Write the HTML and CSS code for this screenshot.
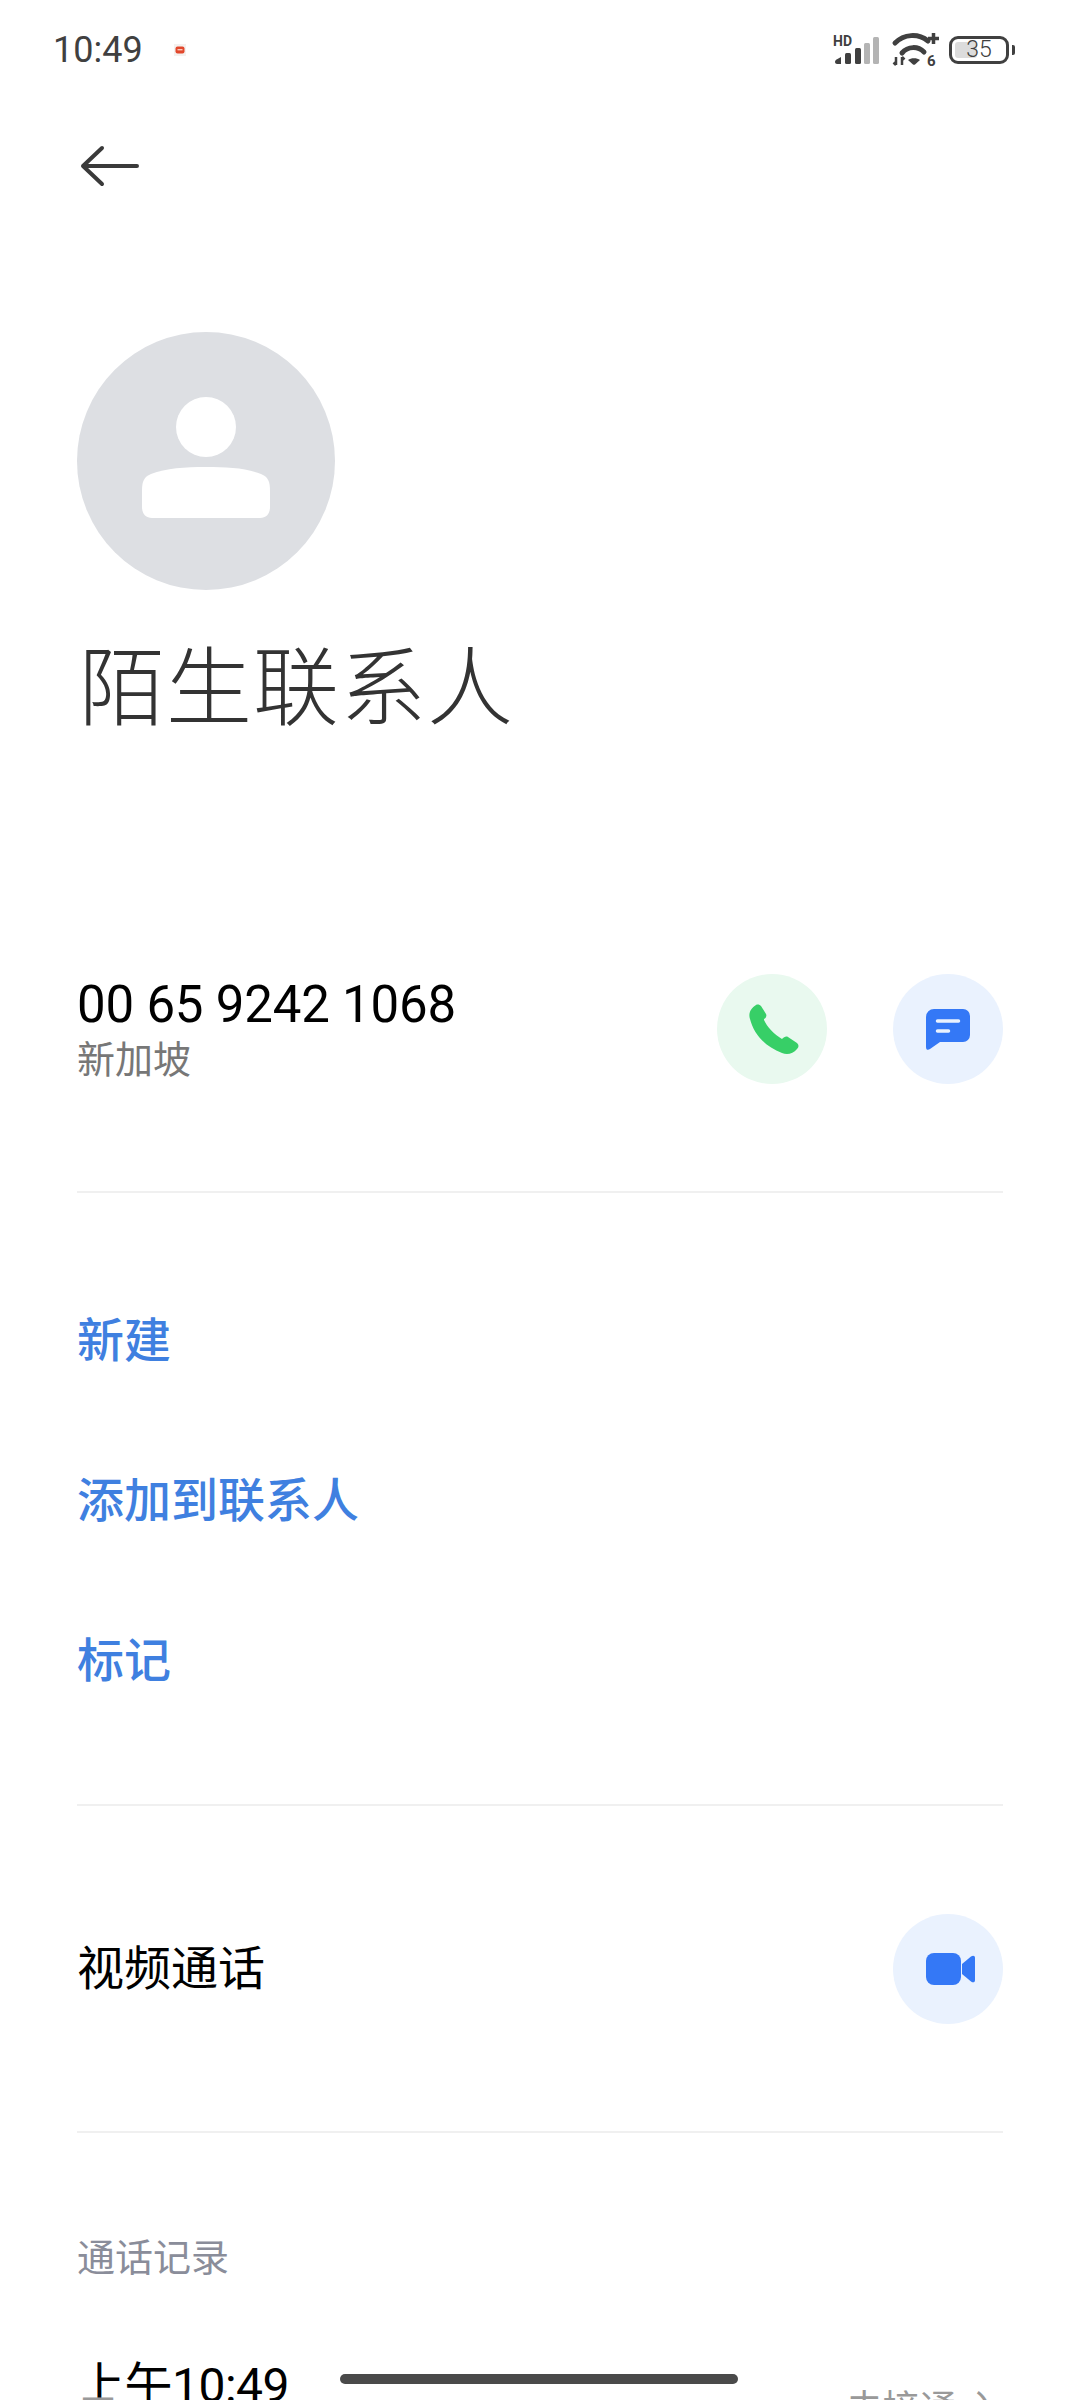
FILE: index.html

```html
<!DOCTYPE html>
<html lang="zh-CN">
	<head>
		<title>陌生联系人</title>
		<meta charset="utf-8">
		<link rel="stylesheet" href="styles.css">
	</head>
	<body>
		<main class="page">
			<header class="status-bar">
				<div class="status-left">
					<span class="status-time">10:49</span>
					<svg class="status-app" width="14" height="14" viewBox="0 0 14 14">
						<rect x="1" y="1" width="12" height="12" fill="#f4f1ef"/>
						<rect x="2.500" y="3.500" width="9" height="7" rx="2" fill="#e2482c"/>
						<rect x="4.500" y="6" width="5" height="1.400" fill="#f9c9bc"/>
					</svg>
				</div>
				<div class="status-right">
					<div class="signal">
						<span class="signal-hd">HD</span>
						<svg width="46" height="28" viewBox="0 0 46 28">
							<path d="M2 26C2 24.500 3 23.500 4.500 23L8 21V28H4C3 28 2 27 2 26Z" fill="#404040"/>
							<rect x="12" y="17" width="6" height="11" rx="1.500" fill="#404040"/>
							<rect x="22" y="12" width="6" height="16" rx="1.500" fill="#404040"/>
							<rect x="31" y="7" width="6" height="21" rx="1.500" fill="#b4b4b4"/>
							<rect x="40" y="1" width="6" height="27" rx="1.500" fill="#b4b4b4"/>
						</svg>
					</div>
					<svg class="wifi" width="48" height="34" viewBox="0 0 48 34">
						<g fill="none" stroke="#404040" stroke-width="5" stroke-linecap="round">
							<path d="M4 11C13 2 27 1 37 9"/>
							<path d="M11 21C17 14 27 14 33 20"/>
						</g>
						<path d="M17 28C20 25.500 26 25.500 29 28L24 32.500Q23 33 22 32.500Z" fill="#404040"/>
						<path d="M37 6.500H48M42.500 1V12" fill="none" stroke="#404040" stroke-width="3.500"/>
						<path d="M5 25V33M2.500 30.500 5 33M11 33V25M13.500 27.500 11 25" fill="none" stroke="#404040" stroke-width="2.500"/>
						<text class="wifi-six" x="36" y="34">6</text>
					</svg>
					<div class="battery">
						<div class="battery-body">
							<span class="battery-fill"></span>
							<span class="battery-level">35</span>
						</div>
						<span class="battery-tip"></span>
					</div>
				</div>
			</header>

			<nav class="top-nav">
				<svg width="60" height="42" viewBox="0 0 60 42">
					<path d="M57 21H3M22 3 3 21l19 18" fill="none" stroke="#3a3a3a" stroke-width="4" stroke-linecap="round" stroke-linejoin="round"/>
				</svg>
			</nav>

			<section class="profile">
				<div class="avatar">
					<svg width="130" height="122" viewBox="0 0 130 122">
						<circle cx="65" cy="30" r="30" fill="#fff"/>
						<path d="M1 94C1 84 3 80 10 77 25 71 44 70 65 70 86 70 105 71 120 77 127 80 129 84 129 94V110C129 117 125 121 119 121H11C5 121 1 117 1 110Z" fill="#fff"/>
					</svg>
				</div>
				<h1 class="contact-name">陌生联系人</h1>
			</section>

			<section class="number-section">
				<div class="number-info">
					<div class="number">00 65 9242 1068</div>
					<div class="region">新加坡</div>
				</div>
				<div class="number-actions">
					<button class="round-btn green">
						<svg class="nudge" width="50" height="50" viewBox="0 0 50 50">
							<path d="M7 1C9 0 11 1 12 2L17 10C18 12 17 14 15 15L15 16C18 23 25 30 33 35 35 33 37 32 39 33L48 39C50 41 50 43 48 45 44 50 38 51 33 49 17 43 5 31 1 15-1 9 2 4 7 1Z" fill="#37cf67"/>
						</svg>
					</button>
					<button class="round-btn blue">
						<svg width="44" height="41" viewBox="0 0 44 41">
							<path d="M8 0H37A7 7 0 0 1 44 7V26A7 7 0 0 1 37 33H14L4 40C2 41.500 0 41 0 38V8A8 8 0 0 1 8 0Z" fill="#3478f6"/>
							<path d="M11.500 12H32.500M11.500 22H22.500" fill="none" stroke="#eaf2fe" stroke-width="3.500" stroke-linecap="round"/>
						</svg>
					</button>
				</div>
			</section>

			<section class="actions">
				<a class="action">新建</a>
				<a class="action">添加到联系人</a>
				<a class="action">标记</a>
			</section>

			<section class="video-section">
				<span class="video-label">视频通话</span>
				<button class="round-btn blue">
					<svg class="nudge" width="49" height="32" viewBox="0 0 49 32">
						<rect width="35" height="32" rx="8" fill="#3478f6"/>
						<path d="M36 11 45 3.500C47 2 49 2.500 49 5V27C49 29.500 47 30 45 28.500L36 21Z" fill="#3478f6"/>
					</svg>
				</button>
			</section>

			<section class="history">
				<h2 class="history-title">通话记录</h2>
				<div class="history-row">
					<span class="history-time">上午10:49</span>
					<span class="history-type">未接通 入</span>
				</div>
				<div class="history-sub">二</div>
			</section>

			<div class="home-bar"></div>
		</main>
	</body>
</html>
```

FILE: styles.css

```css
html,body{
	margin:0;
	background:#fff;
}

*{
	box-sizing:border-box;
}

.page{
	position:relative;
	width:1080px;
	height:2400px;
	overflow:hidden;
	font-family:Roboto,"Noto Sans CJK SC",sans-serif;
	color:#000;
}

.status-bar{
	display:flex;
	justify-content:space-between;
	align-items:center;
	height:100px;
	padding:0 65px 0 53px;
}
.status-left,.status-right{
	display:flex;
	align-items:center;
}
.status-time{
	font-size:36px;
	color:#404040;
}
.status-app{
	margin-left:30px;
}
.status-right{
	gap:12px;
}

.signal{
	position:relative;
	width:46px;
	height:28px;
	margin:-1px 0 0 0;
}
.signal svg{
	display:block;
}
.signal-hd{
	position:absolute;
	left:0;
	top:-1px;
	font-size:14px;
	line-height:12px;
	font-weight:700;
	color:#404040;
}
.wifi{
	margin:-2px -2px 0 0;
}
.wifi-six{
	font:700 15px Roboto,sans-serif;
	fill:#404040;
}

.battery{
	display:flex;
	align-items:center;
	gap:3px;
	margin-top:-1px;
}
.battery-body{
	position:relative;
	display:flex;
	align-items:center;
	justify-content:center;
	width:60px;
	height:28px;
	border:3px solid #404040;
	border-radius:9px;
}
.battery-fill{
	position:absolute;
	left:3px;
	top:3px;
	bottom:3px;
	width:22px;
	background:#dcdcdc;
	border-radius:3px;
}
.battery-level{
	position:relative;
	font-size:23px;
	font-weight:300;
	color:#404040;
}
.battery-tip{
	width:3px;
	height:10px;
	background:#404040;
	border-radius:0 2px 2px 0;
}

.top-nav{
	display:flex;
	align-items:center;
	height:132px;
	padding:0 0 0 80px;
}

.profile{
	padding:100px 0 0 77px;
}
.avatar{
	display:flex;
	align-items:center;
	justify-content:center;
	width:258px;
	height:258px;
	padding-bottom:6px;
	border-radius:50%;
	background:#dddfe3;
}
.contact-name{
	margin:44px 0 0 2px;
	font-size:86px;
	line-height:112px;
	letter-spacing:1px;
	font-weight:300;
	color:#333;
}

.number-section,.video-section{
	display:flex;
	justify-content:space-between;
	align-items:center;
	margin:0 77px;
	border-bottom:2px solid #f0f0f0;
}
.number-section{
	margin-top:228px;
	padding-bottom:107px;
}
.number{
	font-size:51px;
	line-height:62px;
	letter-spacing:-.2px;
}
.region{
	font-size:38px;
	line-height:48px;
	color:#777;
}
.number-actions{
	display:flex;
	gap:66px;
}

.round-btn{
	display:flex;
	align-items:center;
	justify-content:center;
	width:110px;
	height:110px;
	padding:0;
	border:0;
	border-radius:50%;
}
.nudge{
	margin-left:4px;
}
.green{
	background:#e9f9ef;
}
.blue{
	background:#eaf2fe;
}

.actions{
	margin:0 77px;
	padding:67px 0 64px;
	border-bottom:2px solid #f0f0f0;
}
.action{
	display:flex;
	align-items:center;
	height:160px;
	padding-bottom:7px;
	font-size:47px;
	font-weight:500;
	color:#3f80e0;
}

.video-section{
	padding:108px 0 107px;
}
.video-label{
	margin-top:-9px;
	font-size:47px;
	font-weight:400;
}

.history{
	margin:0 77px;
}
.history-title{
	margin:0;
	padding-top:100px;
	font-size:38px;
	line-height:50px;
	font-weight:400;
	color:#8a8d9a;
}
.history-row{
	display:flex;
	justify-content:space-between;
	align-items:flex-start;
	margin-top:73px;
	height:32px;
}
.history-time{
	font-size:48px;
	line-height:60px;
	letter-spacing:-.5px;
}
.history-type{
	margin-top:34px;
	font-size:37px;
	line-height:40px;
	color:#999;
}
.history-sub{
	font-size:42px;
	line-height:50px;
	color:#999;
}

.home-bar{
	position:absolute;
	left:340px;
	top:2374px;
	width:398px;
	height:10px;
	border-radius:5px;
	background:#4a4a4a;
}
```
